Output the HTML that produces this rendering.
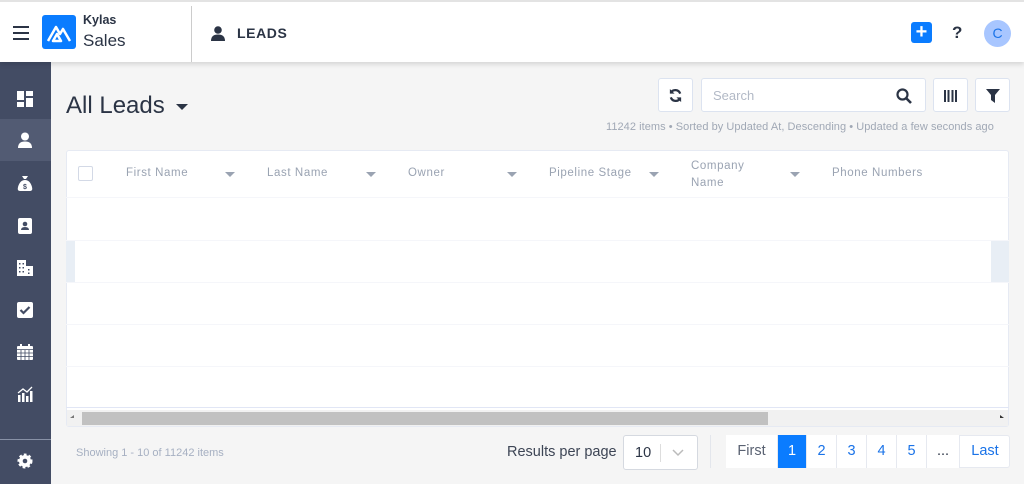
<!DOCTYPE html>
<html><head><style>
*{box-sizing:border-box;margin:0;padding:0}
body{width:1024px;height:484px;overflow:hidden;background:#f5f5f5;font-family:"Liberation Sans",sans-serif;position:relative;color:#2b3445}
.abs{position:absolute}
.top{left:0;top:0;width:1024px;height:62px;background:#fff;border-top:2px solid #e3e3e3;box-shadow:0 2px 5px rgba(0,0,0,.15);z-index:2}
.side{left:0;top:62px;width:51px;height:422px;background:#434c64}
.ic{position:absolute;left:17px;width:16px;height:16px}
.btn{background:#fff;border:1px solid #dce3f0;border-radius:3px}
.hd{position:absolute;top:167px;font-size:11.5px;color:#9aa3b2;letter-spacing:.6px}
.car{position:absolute;width:0;height:0;border-left:5px solid transparent;border-right:5px solid transparent;border-top:5px solid #9aa3b2}
.row{position:absolute;left:66px;width:943px;height:1px;background:#f5f6fa}
.pg{position:absolute;top:435px;height:33px;border-right:1px solid #e6e9f0;font-size:14.5px;color:#1a73e8;text-align:center;line-height:33px;background:#fff}
</style></head><body>
<div class="abs top">
 <div class="abs" style="left:13px;top:24px;width:16px;height:2px;background:#2b3445;box-shadow:0 6px 0 #2b3445,0 12px 0 #2b3445"></div>
 <div class="abs" style="left:42px;top:13px;width:34px;height:34px;background:#0a7cff;border-radius:3px">
  <svg width="34" height="34" viewBox="0 0 34 34"><path d="M6 26 L14 12 L18 19 L21 14 L28 26 M11 26 L15 19 L19 26Z" stroke="#fff" stroke-width="2.5" fill="none" stroke-linejoin="round"/></svg>
 </div>
 <div class="abs" style="left:83px;top:11px;font-size:12.5px;font-weight:bold;color:#2b3445">Kylas</div>
 <div class="abs" style="left:83px;top:29px;font-size:17px;color:#2b3445">Sales</div>
 <div class="abs" style="left:191px;top:4px;width:1px;height:56px;background:#ccc"></div>
 <svg class="abs" style="left:211px;top:24px" width="14" height="15" viewBox="0 0 14 15"><circle cx="7" cy="4" r="3.8" fill="#2b3445"/><path d="M0 15 Q0 8.5 7 8.5 Q14 8.5 14 15Z" fill="#2b3445"/></svg>
 <div class="abs" style="left:237px;top:23px;font-size:14px;font-weight:bold;letter-spacing:.6px">LEADS</div>
 <div class="abs" style="left:911px;top:20px;width:21px;height:21px;background:#0a7cff;border-radius:3px;color:#fff;font-size:20px;font-weight:bold;text-align:center;line-height:21px">+</div>
 <div class="abs" style="left:952px;top:21px;font-size:17px;font-weight:bold">?</div>
 <div class="abs" style="left:984px;top:18px;width:27px;height:27px;border-radius:50%;background:#a8c6ff;color:#1a73e8;font-size:14px;text-align:center;line-height:27px">C</div>
</div>
<div class="abs side">
 <div class="abs" style="left:0;top:57px;width:51px;height:42px;background:#525b73"></div>
 <svg class="ic" style="top:29px" viewBox="0 0 16 16" fill="#fff"><rect x="0" y="0" width="7" height="9"/><rect x="9" y="0" width="7" height="5"/><rect x="0" y="11" width="7" height="5"/><rect x="9" y="7" width="7" height="9"/></svg>
 <svg class="ic" style="top:70px" viewBox="0 0 16 16" fill="#fff"><circle cx="8" cy="4.5" r="4"/><path d="M1 16 Q1 9.5 8 9.5 Q15 9.5 15 16Z"/></svg>
 <svg class="ic" style="top:113px" viewBox="0 0 16 16"><path d="M5 1h6l-2 3h-2z M3 16 Q0 16 1 12 Q3 5 8 5 Q13 5 15 12 Q16 16 13 16Z" fill="#fff"/><text x="8" y="14" font-size="7" font-weight="bold" text-anchor="middle" fill="#434c64" font-family="Liberation Sans">$</text></svg>
 <svg class="ic" style="top:156px" viewBox="0 0 16 16"><rect x="1" y="0" width="14" height="16" rx="2" fill="#fff"/><circle cx="8" cy="6" r="2.3" fill="#434c64"/><path d="M4 12 Q4 9 8 9 Q12 9 12 12Z" fill="#434c64"/></svg>
 <svg class="ic" style="top:198px" viewBox="0 0 16 16"><rect x="0" y="0" width="9" height="16" fill="#fff"/><rect x="9" y="6" width="7" height="10" fill="#fff"/><g fill="#434c64"><rect x="2" y="3" width="1.5" height="1.5"/><rect x="5.5" y="3" width="1.5" height="1.5"/><rect x="2" y="7" width="1.5" height="1.5"/><rect x="5.5" y="7" width="1.5" height="1.5"/><rect x="2" y="11" width="1.5" height="1.5"/><rect x="5.5" y="11" width="1.5" height="1.5"/><rect x="11" y="9" width="1.5" height="1.5"/><rect x="11" y="12.5" width="1.5" height="1.5"/></g></svg>
 <svg class="ic" style="top:240px" viewBox="0 0 16 16"><rect x="0" y="0" width="16" height="16" rx="2" fill="#fff"/><path d="M3.5 8 L6.5 11 L12.5 5" stroke="#434c64" stroke-width="2.2" fill="none"/></svg>
 <svg class="ic" style="top:282px" viewBox="0 0 16 16"><rect x="0" y="2" width="16" height="14" rx="1" fill="#fff"/><rect x="3" y="0" width="2" height="4" fill="#fff"/><rect x="11" y="0" width="2" height="4" fill="#fff"/><path d="M0 5.5h16 M0 9h16 M0 12.5h16 M4 6v10 M8 6v10 M12 6v10" stroke="#434c64" stroke-width=".8"/></svg>
 <svg class="ic" style="top:324px" viewBox="0 0 16 16" fill="#fff"><rect x="1" y="9" width="2.5" height="7"/><rect x="5" y="7" width="2.5" height="9"/><rect x="9" y="10" width="2.5" height="6"/><rect x="13" y="5" width="2.5" height="11"/><path d="M1 7 L6 3 L10 6 L15 1" stroke="#fff" stroke-width="1.3" fill="none"/></svg>
 <div class="abs" style="left:0;top:377px;width:51px;height:1px;background:#8891a6"></div>
 <svg class="ic" style="top:391px" viewBox="0 0 16 16"><circle cx="8" cy="8" r="6" fill="#fff" stroke="#fff" stroke-width="3" stroke-dasharray="2.5 2"/><circle cx="8" cy="8" r="2.3" fill="#434c64"/></svg>
</div>
<div class="abs" style="left:66px;top:92px;font-size:24px;color:#2b3445">All Leads</div>
<div class="car" style="left:176px;top:104px;border-width:6px 6px 0;border-top-color:#2b3445"></div>
<div class="abs btn" style="left:658px;top:78px;width:35px;height:34px"><svg style="margin:9px" width="15" height="15" viewBox="0 0 16 16"><path d="M13 6 A5.5 5.5 0 0 0 3 5 M3 10 A5.5 5.5 0 0 0 13 11" stroke="#2b3445" stroke-width="2.4" fill="none"/><path d="M2 1v5h5z M14 15v-5h-5z" fill="#2b3445"/></svg></div>
<div class="abs btn" style="left:701px;top:78px;width:225px;height:34px;font-size:13px;color:#b2b9c6;padding:9px 11px">Search
 <svg class="abs" style="left:194px;top:9px" width="16" height="16" viewBox="0 0 16 16"><circle cx="6.5" cy="6.5" r="5" stroke="#2b3445" stroke-width="2.2" fill="none"/><path d="M10 10 L15 15" stroke="#2b3445" stroke-width="2.6"/></svg></div>
<div class="abs btn" style="left:933px;top:78px;width:35px;height:34px"><div style="margin:11px 10px;width:13px;height:12px;background:repeating-linear-gradient(90deg,#2b3445 0 2px,transparent 2px 3.7px)"></div></div>
<div class="abs btn" style="left:975px;top:78px;width:35px;height:34px"><svg style="margin:10px" width="14" height="14" viewBox="0 0 14 14"><path d="M0 0h14l-5 6v8l-4-3v-5z" fill="#2b3445"/></svg></div>
<div class="abs" style="left:606px;top:121px;font-size:11px;color:#a0a8b5;white-space:nowrap;letter-spacing:.05px">11242 items • Sorted by Updated At, Descending • Updated a few seconds ago</div>
<div class="abs" style="left:66px;top:150px;width:943px;height:277px;background:#fff;border:1px solid #e6eaf3;border-radius:3px"></div>
<div class="abs" style="left:66px;top:241px;width:9px;height:41px;background:#e8eef5"></div>
<div class="abs" style="left:991px;top:241px;width:18px;height:41px;background:#e8eef5"></div>
<div class="abs" style="left:78px;top:166px;width:15px;height:15px;border:1px solid #d3d9e6;border-radius:2px"></div>
<div class="hd" style="left:126px">First Name</div><div class="car" style="left:225px;top:172px"></div>
<div class="hd" style="left:267px">Last Name</div><div class="car" style="left:366px;top:172px"></div>
<div class="hd" style="left:408px">Owner</div><div class="car" style="left:507px;top:172px"></div>
<div class="hd" style="left:549px">Pipeline Stage</div><div class="car" style="left:649px;top:172px"></div>
<div class="hd" style="left:691px;top:158px;line-height:17px">Company<br>Name</div><div class="car" style="left:790px;top:172px"></div>
<div class="hd" style="left:832px">Phone Numbers</div>
<div class="row" style="top:197px"></div><div class="row" style="top:240px"></div><div class="row" style="top:282px"></div><div class="row" style="top:324px"></div><div class="row" style="top:366px"></div><div class="row" style="top:407px;background:#e1e6f5"></div>
<div class="abs" style="left:67px;top:410px;width:941px;height:16px;background:#f1f1f1"></div>
<div class="abs" style="left:82px;top:412px;width:686px;height:13px;background:#c1c1c1"></div>
<div class="car" style="left:70px;top:415px;border-width:3px 4px 3px 0;border-color:transparent #777 transparent transparent"></div>
<div class="car" style="left:1000px;top:415px;border-width:3px 0 3px 4px;border-color:transparent transparent transparent #333"></div>
<div class="abs" style="left:76px;top:447px;font-size:11px;color:#a6b0c2">Showing 1 - 10 of 11242 items</div>
<div class="abs" style="left:507px;top:444px;font-size:14.5px;color:#3d4555">Results per page</div>
<div class="abs btn" style="left:623px;top:435px;width:75px;height:35px;border-color:#d5d9e0"><span class="abs" style="left:11px;top:9px;font-size:14.5px">10</span><div class="abs" style="left:36px;top:8px;width:1px;height:18px;background:#ddd"></div><svg class="abs" style="left:48px;top:13px" width="12" height="8" viewBox="0 0 12 8"><path d="M1 1 L6 6 L11 1" stroke="#bbb" stroke-width="1.5" fill="none"/></svg></div>
<div class="abs" style="left:710px;top:435px;width:1px;height:33px;background:#e3e6ec"></div>
<div class="abs" style="left:726px;top:435px;width:284px;height:33px;border:1px solid #e6e9f0;border-radius:3px;background:#fff"></div>
<div class="pg" style="left:726px;width:52px;color:#5a6272">First</div>
<div class="pg" style="left:778px;width:29px;background:#0a7cff;color:#fff">1</div>
<div class="pg" style="left:807px;width:30px">2</div>
<div class="pg" style="left:837px;width:30px">3</div>
<div class="pg" style="left:867px;width:30px">4</div>
<div class="pg" style="left:897px;width:30px">5</div>
<div class="pg" style="left:927px;width:33px;color:#2b3445">...</div>
<div class="pg" style="left:960px;width:50px;border-right:none;background:transparent">Last</div>
</body></html>
